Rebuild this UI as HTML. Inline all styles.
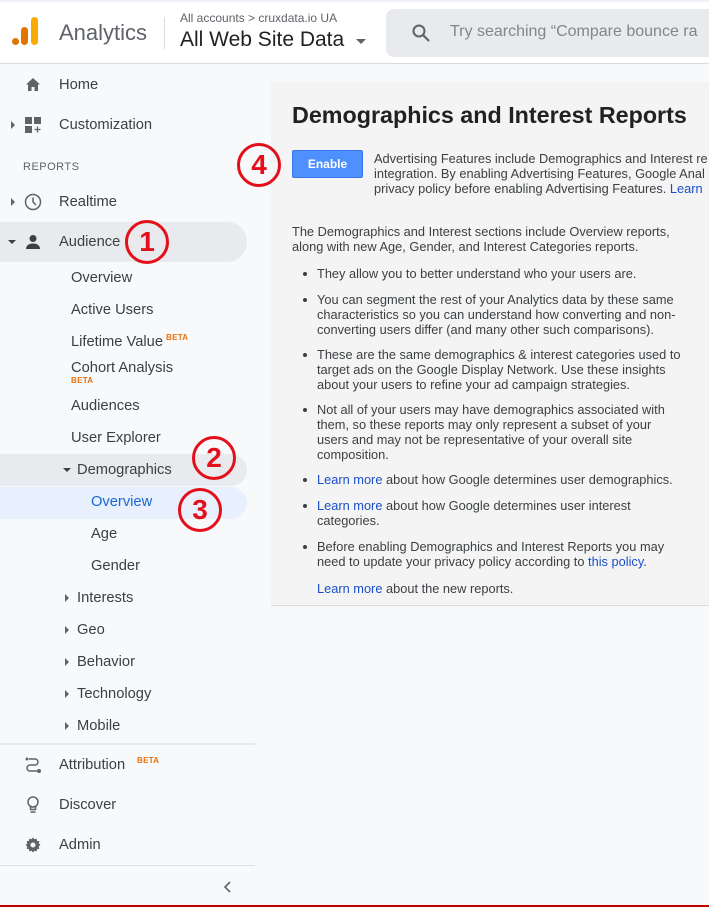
<!DOCTYPE html>
<html><head><meta charset="utf-8"><style>
*{margin:0;padding:0;box-sizing:border-box}
body{width:709px;height:907px;overflow:hidden;background:#f8f9fa;font-family:"Liberation Sans",Arial,sans-serif;position:relative;color:#3c4043}
.a{position:absolute;white-space:nowrap}
.nav{font-size:14.7px;color:#3c4043;line-height:16px}
.beta{font-size:8px;color:#e8710a;font-weight:bold;letter-spacing:.3px}
.tri-r{width:0;height:0;border-top:4px solid transparent;border-bottom:4px solid transparent;border-left:4px solid #5f6368}
.tri-d{width:0;height:0;border-left:4px solid transparent;border-right:4px solid transparent;border-top:4px solid #3c4043}
.circ{position:absolute;width:44px;height:44px;border:3px solid #e3101c;border-radius:50%;color:#e3101c;font:bold 28px/38px "Liberation Sans",sans-serif;text-align:center}
.c{font-size:12.8px;line-height:15px;color:#3c4043}
.lk{color:#1a4fc9}
.b{position:absolute;left:317px;font-size:12.8px;line-height:15px;color:#3c4043;width:392px}
.b:before{content:"";position:absolute;left:-14px;top:6px;width:4px;height:4px;border-radius:50%;background:#3c4043}
</style></head><body>
<div class="a" style="left:0;top:0;width:709px;height:64px;background:#fff;border-bottom:1px solid #dadce0"></div>
<div class="a" style="left:0;top:0;width:709px;height:2px;background:#eef2f8"></div>
<div class="a" style="left:12px;top:38px;width:7px;height:7px;border-radius:50%;background:#e37400"></div>
<div class="a" style="left:21px;top:27px;width:7px;height:18px;border-radius:3.5px;background:#e37400"></div>
<div class="a" style="left:31px;top:17px;width:7px;height:28px;border-radius:3.5px;background:#f9ab00"></div>
<div class="a" style="left:59px;top:20px;font-size:22px;color:#5f6368">Analytics</div>
<div class="a" style="left:164px;top:17px;width:1px;height:32px;background:#dadce0"></div>
<div class="a" style="left:180px;top:11px;font-size:12px;color:#5f6368">All accounts &gt; cruxdata.io UA</div>
<div class="a" style="left:180px;top:28px;font-size:21px;color:#202124">All Web Site Data</div>
<div class="a" style="left:356px;top:39px;width:0;height:0;border-left:5px solid transparent;border-right:5px solid transparent;border-top:5px solid #5f6368"></div>
<div class="a" style="left:386px;top:9px;width:330px;height:48px;background:#e8eaed;border-radius:8px"></div>
<svg class="a" style="left:411px;top:23px" width="20" height="20" viewBox="0 0 20 20"><circle cx="8" cy="8" r="5.5" fill="none" stroke="#5f6368" stroke-width="2"/><path d="M12 12l6 6" stroke="#5f6368" stroke-width="2.2"/></svg>
<div class="a" style="left:450px;top:23px;font-size:16px;color:#80868b">Try searching “Compare bounce ra</div>

<svg class="a" style="left:25px;top:77px" width="16" height="15" viewBox="0 0 16 15"><path d="M8 1L1 7.5h2V14h3.5V10h3v4H13V7.5h2z" fill="#5f6368"/></svg>
<div class="a nav" style="left:59px;top:77px">Home</div>
<div class="a tri-r" style="left:11px;top:121px"></div>
<svg class="a" style="left:25px;top:117px" width="16" height="16"><rect x="0" y="0" width="7" height="7" fill="#5f6368"/><rect x="9" y="0" width="7" height="7" fill="#5f6368"/><rect x="0" y="9" width="7" height="7" fill="#5f6368"/><path d="M12.5 9.5v6M9.5 12.5h6" stroke="#5f6368" stroke-width="1.3"/></svg>
<div class="a nav" style="left:59px;top:117px">Customization</div>
<div class="a" style="left:23px;top:161px;font-size:11px;color:#5f6368;letter-spacing:.5px">REPORTS</div>
<div class="a tri-r" style="left:11px;top:198px"></div>
<svg class="a" style="left:24px;top:193px" width="18" height="18"><circle cx="9" cy="9" r="7.5" fill="none" stroke="#5f6368" stroke-width="1.5"/><path d="M9 4.5V9l3 3" fill="none" stroke="#5f6368" stroke-width="1.5"/></svg>
<div class="a nav" style="left:59px;top:194px">Realtime</div>
<div class="a" style="left:0;top:222px;width:247px;height:40px;background:#e8eaed;border-radius:0 20px 20px 0"></div>
<div class="a tri-d" style="left:8px;top:240px"></div>
<svg class="a" style="left:25px;top:234px" width="16" height="16"><circle cx="8" cy="4.5" r="3.5" fill="#3c4043"/><path d="M1 15c0-4 3.5-5.5 7-5.5s7 1.5 7 5.5z" fill="#3c4043"/></svg>
<div class="a nav" style="left:59px;top:234px">Audience</div>
<div class="a nav" style="left:71px;top:270px">Overview</div>
<div class="a nav" style="left:71px;top:302px">Active Users</div>
<div class="a nav" style="left:71px;top:334px">Lifetime Value</div><div class="a beta" style="left:166px;top:333px">BETA</div>
<div class="a nav" style="left:71px;top:360px">Cohort Analysis</div><div class="a beta" style="left:71px;top:376px">BETA</div>
<div class="a nav" style="left:71px;top:398px">Audiences</div>
<div class="a nav" style="left:71px;top:430px">User Explorer</div>
<div class="a" style="left:0;top:454px;width:247px;height:32px;background:#e8eaed;border-radius:0 16px 16px 0"></div>
<div class="a tri-d" style="left:63px;top:468px"></div>
<div class="a nav" style="left:77px;top:462px">Demographics</div>
<div class="a" style="left:0;top:487px;width:247px;height:32px;background:#e8f0fe;border-radius:0 16px 16px 0"></div>
<div class="a nav" style="left:91px;top:494px;color:#1967d2">Overview</div>
<div class="a nav" style="left:91px;top:526px">Age</div>
<div class="a nav" style="left:91px;top:558px">Gender</div>
<div class="a tri-r" style="left:65px;top:594px"></div><div class="a nav" style="left:77px;top:590px">Interests</div>
<div class="a tri-r" style="left:65px;top:626px"></div><div class="a nav" style="left:77px;top:622px">Geo</div>
<div class="a tri-r" style="left:65px;top:658px"></div><div class="a nav" style="left:77px;top:654px">Behavior</div>
<div class="a tri-r" style="left:65px;top:690px"></div><div class="a nav" style="left:77px;top:686px">Technology</div>
<div class="a tri-r" style="left:65px;top:722px"></div><div class="a nav" style="left:77px;top:718px">Mobile</div>
<div class="a" style="left:0;top:743px;width:255px;height:2px;background:#e8eaed"></div>
<svg class="a" style="left:24px;top:756px" width="18" height="18"><circle cx="3" cy="3" r="1.5" fill="#5f6368"/><path d="M5 3h6a3 3 0 0 1 0 6H6a3 3 0 0 0 0 6h7" fill="none" stroke="#5f6368" stroke-width="1.5"/><circle cx="15" cy="15" r="2" fill="#5f6368"/></svg>
<div class="a nav" style="left:59px;top:757px">Attribution</div><div class="a beta" style="left:137px;top:756px">BETA</div>
<svg class="a" style="left:26px;top:796px" width="14" height="18"><circle cx="7" cy="6" r="5" fill="none" stroke="#5f6368" stroke-width="1.5"/><path d="M4.5 11v2.5h5V11M4.5 16h5" stroke="#5f6368" stroke-width="1.5" fill="none"/></svg>
<div class="a nav" style="left:59px;top:797px">Discover</div>
<svg class="a" style="left:25px;top:837px" width="16" height="16" viewBox="0 0 16 16"><path d="M8 0.5l1.5 1.8 2.2-.7.4 2.3 2.3.4-.7 2.2L15.5 8l-1.8 1.5.7 2.2-2.3.4-.4 2.3-2.2-.7L8 15.5l-1.5-1.8-2.2.7-.4-2.3-2.3-.4.7-2.2L.5 8l1.8-1.5-.7-2.2 2.3-.4.4-2.3 2.2.7z" fill="#5f6368"/><circle cx="8" cy="8" r="2.5" fill="#f8f9fa"/></svg>
<div class="a nav" style="left:59px;top:837px">Admin</div>
<div class="a" style="left:0;top:865px;width:255px;height:1px;background:#e0e0e0"></div>
<svg class="a" style="left:223px;top:881px" width="10" height="12"><path d="M7 1L2 6l5 5" fill="none" stroke="#5f6368" stroke-width="1.6"/></svg>
<div class="a" style="left:0;top:905px;width:709px;height:2px;background:#c00000"></div>

<div class="a" style="left:271px;top:82px;width:438px;height:524px;background:#f4f4f4;border-bottom:1px solid #dcdcdc"></div>
<div class="a" style="left:292px;top:102px;font-size:23.3px;font-weight:bold;color:#212121">Demographics and Interest Reports</div>
<div class="a" style="left:292px;top:150px;width:71px;height:28px;background:#4d90fe;border:1px solid #3079ed;border-radius:2px;color:#fff;font-size:12px;font-weight:bold;text-align:center;line-height:26px">Enable</div>
<div class="a c" style="left:374px;top:151px">Advertising Features include Demographics and Interest re<br>integration. By enabling Advertising Features, Google Anal<br>privacy policy before enabling Advertising Features. <span class="lk">Learn</span></div>
<div class="a c" style="left:292px;top:224px">The Demographics and Interest sections include Overview reports,<br>along with new Age, Gender, and Interest Categories reports.</div>
<div class="b" style="top:266px">They allow you to better understand who your users are.</div>
<div class="b" style="top:292px">You can segment the rest of your Analytics data by these same<br>characteristics so you can understand how converting and non-<br>converting users differ (and many other such comparisons).</div>
<div class="b" style="top:347px">These are the same demographics &amp; interest categories used to<br>target ads on the Google Display Network. Use these insights<br>about your users to refine your ad campaign strategies.</div>
<div class="b" style="top:402px">Not all of your users may have demographics associated with<br>them, so these reports may only represent a subset of your<br>users and may not be representative of your overall site<br>composition.</div>
<div class="b" style="top:472px"><span class="lk">Learn more</span> about how Google determines user demographics.</div>
<div class="b" style="top:498px"><span class="lk">Learn more</span> about how Google determines user interest<br>categories.</div>
<div class="b" style="top:539px">Before enabling Demographics and Interest Reports you may<br>need to update your privacy policy according to <span class="lk">this policy</span>.</div>
<div class="a c" style="left:317px;top:581px"><span class="lk">Learn more</span> about the new reports.</div>

<div class="circ" style="left:125px;top:220px">1</div>
<div class="circ" style="left:192px;top:436px">2</div>
<div class="circ" style="left:178px;top:488px">3</div>
<div class="circ" style="left:237px;top:143px">4</div>
</body></html>
